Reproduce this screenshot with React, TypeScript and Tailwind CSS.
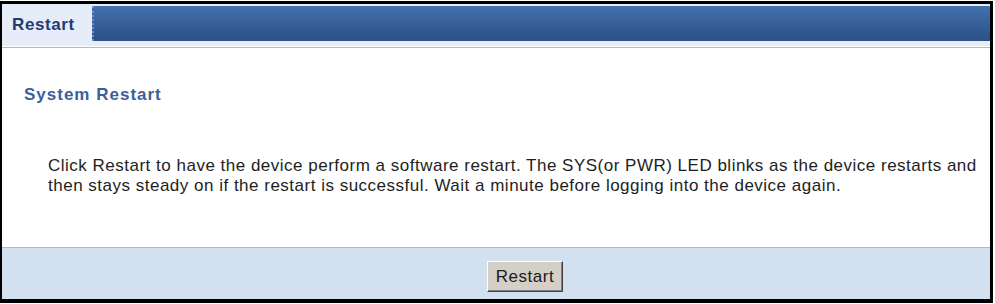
import React from 'react';

const font = { fontFamily: '"Liberation Sans", Arial, sans-serif' };

const App = () => {
  return (
    <div className="w-[995px] h-[304px] bg-white pt-px" style={font}>
      <div className="w-[993px] h-[302px] border-l-2 border-t-[3px] border-r-[3px] border-b-[4px] border-black flex flex-col">
        {/* tab header */}
        <div className="h-[44px] bg-[#e6edf8] flex flex-col border-b border-[#a6bbdc]">
          <div className="flex h-[37px]">
            <div className="w-[90px] pl-[10px] pt-[8px] text-[17px] font-bold tracking-[0.6px] text-[#1f3b78]">
              Restart
            </div>
            <div className="flex-1 mt-[2px] bg-gradient-to-b from-[#4372ad] to-[#2c4f86] border-l-2 border-dotted border-[#6f8fbd]" />
          </div>
          <div className="flex-1 border-b border-white" />
        </div>

        {/* content */}
        <div className="flex-1 bg-white">
          <div className="pl-[22px] pt-[34px] text-[17px] font-bold tracking-[1px] text-[#3d5e9b]">
            System Restart
          </div>
          <p className="pl-[46px] pt-[48px] text-[17px] leading-[20px] tracking-[0.5px] text-[#1e1e1e]">
            Click Restart to have the device perform a software restart. The SYS(or PWR) LED blinks as the device restarts and then stays steady on if the restart is successful. Wait a minute before logging into the device again.
          </p>
        </div>

        {/* footer */}
        <div className="h-[52px] bg-[#d3e0ef] border-t border-[#a8bad7] flex items-start justify-center pt-[13px] pl-[58px]">
          <button className="h-[31px] px-[8px] bg-[#d4d0c8] border border-t-white border-l-white border-r-[#404040] border-b-[#404040] shadow-[inset_-1px_-1px_0_#808080] text-[17px] tracking-[0.5px] text-[#1a1a1a]">
            Restart
          </button>
        </div>
      </div>
    </div>
  );
};

export default App;
